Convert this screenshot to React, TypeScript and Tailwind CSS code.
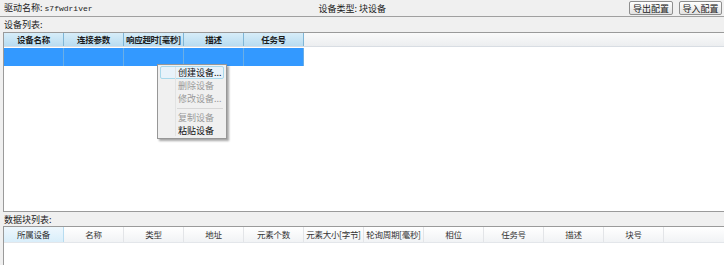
import React from 'react';

const cjk = { fontFamily: '"Noto Sans CJK SC", "Liberation Sans", sans-serif' };

const deviceCols = ['设备名称', '连接参数', '响应超时[毫秒]', '描述', '任务号'];
const blockCols = ['所属设备', '名称', '类型', '地址', '元素个数', '元素大小[字节]', '轮询周期[毫秒]', '相位', '任务号', '描述', '块号'];

const MenuItem: React.FC<{ label: string; disabled?: boolean; active?: boolean }> = ({ label, disabled, active }) => (
  <div className="h-[13px] px-[2px]">
    <div
      className={
        'h-full flex items-center pl-[17px] rounded-[2px] border ' +
        (active ? 'border-[#a8d8eb] bg-[#e8f2fa]' : 'border-transparent')
      }
    >
      <span className={'text-[9px] leading-none whitespace-nowrap ' + (disabled ? 'text-[#9a9a9a]' : 'text-[#111]')}>{label}</span>
    </div>
  </div>
);

const App: React.FC = () => {
  return (
    <div className="w-[724px] h-[265px] bg-[#f0f0f0] overflow-hidden flex flex-col text-[#222]" style={cjk}>
      {/* Top bar */}
      <div className="h-[17px] flex items-center border-b border-[#a0a0a0] pl-[4px] pr-[2px]">
        <span className="text-[9px] leading-none whitespace-nowrap">
          驱动名称: <span className="font-['Liberation_Mono',monospace] text-[8px]">s7fwdriver</span>
        </span>
        <span className="text-[9px] leading-none ml-[226px] whitespace-nowrap">设备类型: 块设备</span>
        <div className="ml-auto flex gap-[6px]">
          <button className="h-[14px] w-[44px] border border-[#8e8e8e] rounded-[2px] bg-gradient-to-b from-white to-[#e2e2e2] text-[9px] leading-none whitespace-nowrap">导出配置</button>
          <button className="h-[14px] w-[43px] border border-[#8e8e8e] rounded-[2px] bg-gradient-to-b from-white to-[#e2e2e2] text-[9px] leading-none whitespace-nowrap">导入配置</button>
        </div>
      </div>

      {/* Device list label */}
      <div className="h-[15px] flex items-center pl-[4px]">
        <span className="text-[9px] leading-none">设备列表:</span>
      </div>

      {/* Device list panel */}
      <div className="relative h-[180px] ml-[3px] bg-white border-t border-l border-b border-[#9a9a9a]">
        <div className="flex h-[14px] bg-gradient-to-b from-[#fafafa] to-[#eceef0] border-b border-[#d8dde3]">
          {deviceCols.map((c) => (
            <div
              key={c}
              className="w-[60px] h-full flex items-center justify-center border-r border-[#7fb6d6] bg-gradient-to-b from-[#d7edf9] to-[#b8dcf0] text-[8.5px] leading-none font-semibold text-[#1a1a1a] whitespace-nowrap tracking-[-0.3px] overflow-hidden"
            >
              {c}
            </div>
          ))}
        </div>
        <div className="flex h-[18px] mt-[1px]">
          {deviceCols.map((c) => (
            <div key={c} className="w-[60px] h-full bg-[#3399ff] border-r border-[#6aaee6]" />
          ))}
        </div>

        {/* Context menu */}
        <div className="absolute left-[153px] top-[31px] w-[70px] h-[75px] bg-[#f0f0f0] border border-[#979797] shadow-[2px_2px_2px_rgba(0,0,0,0.35)] pt-[1px]">
          <div className="absolute left-[17px] top-[2px] bottom-[2px] w-px bg-[#e2e3e3]" />
          <MenuItem label="创建设备..." active />
          <MenuItem label="删除设备" disabled />
          <MenuItem label="修改设备..." disabled />
          <div className="h-[6px] flex items-center pl-[19px] pr-[3px]">
            <div className="w-full h-px bg-[#d7d7d7]" />
          </div>
          <MenuItem label="复制设备" disabled />
          <MenuItem label="粘贴设备" />
        </div>
      </div>

      {/* Block list label */}
      <div className="h-[14px] flex items-center pl-[4px]">
        <span className="text-[9px] leading-none">数据块列表:</span>
      </div>

      {/* Block list panel */}
      <div className="flex-1 ml-[3px] bg-white border-t border-l border-[#9a9a9a]">
        <div className="flex h-[16px] bg-gradient-to-b from-[#ffffff] to-[#f1f3f5] border-b border-[#e3e6ea]">
          {blockCols.map((c, i) => (
            <div
              key={c + i}
              className={
                'w-[60px] h-full flex items-center justify-center border-r text-[8.5px] leading-none text-[#333] whitespace-nowrap tracking-[-0.3px] overflow-hidden ' +
                (i === 0 ? 'bg-gradient-to-b from-[#eef7fd] to-[#d9eefa] border-[#b7dcf0]' : 'border-[#e3e5e8]')
              }
            >
              {c}
            </div>
          ))}
        </div>
      </div>
    </div>
  );
};

export default App;
